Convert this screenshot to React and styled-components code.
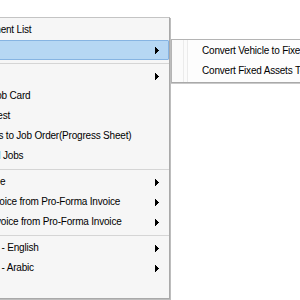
import React from 'react';
import styled, { createGlobalStyle } from 'styled-components';

const GlobalStyle = createGlobalStyle`
  html, body {
    margin: 0;
    padding: 0;
    background: #ffffff;
    overflow: hidden;
  }
  body {
    font-family: "Liberation Sans", Arial, sans-serif;
    font-size: 10px;
    color: #000000;
  }
`;

const Page = styled.div`
  position: relative;
  width: 300px;
  height: 300px;
  overflow: hidden;
  background: #ffffff;
`;

// popup menus lie over the page, so they are placed absolutely
const Menu = styled.div`
  position: absolute;
  left: -80px;
  top: 17px;
  width: 250px;
  box-sizing: border-box;
  display: flex;
  flex-direction: column;
  padding: 2px 0 0 2px;
  background: #f6f6f6;
  border: 1px solid #a9a9a9;
  border-top-color: #c4c4c4;
  box-shadow: 1px 1px 0 #bdbdbd;
`;

const SubMenu = styled.div`
  position: absolute;
  left: 171px;
  top: 39px;
  width: 200px;
  box-sizing: border-box;
  display: flex;
  flex-direction: column;
  padding: 1px 0 1px 1px;
  border: 1px solid #b4b4b4;
  border-bottom-color: #a9a9a9;
  box-shadow: 0 1px 0 #c9c9c9;
  background: linear-gradient(
    to right,
    #fbfbfb 0 11px,
    #ebebeb 11px 12px,
    #fbfbfb 12px 15px,
    #ebebeb 15px 16px,
    #fdfdfd 16px
  );
`;

const Item = styled.div`
  display: flex;
  align-items: center;
  height: 20px;
  box-sizing: border-box;
  padding-left: ${(p) => p.$indent}px;
  padding-right: 9px;
  white-space: nowrap;
  letter-spacing: -0.2px;
  border: 1px solid ${(p) => (p.$active ? '#86b4e2' : 'transparent')};
  background: ${(p) => (p.$active ? '#b6d7f3' : 'transparent')};
  border-radius: 1px;
`;

const Label = styled.span`
  flex: 1;
  line-height: 18px;
  margin-left: -1px;
`;

const Separator = styled.div`
  height: 6px;
  display: flex;
  align-items: center;
  &::after {
    content: '';
    flex: 1;
    height: 0;
    border-top: 1px solid #d5d5d5;
  }
`;

const Arrow = () => (
  <svg width="4" height="7" viewBox="0 0 4 7">
    <rect x="0" y="0" width="1" height="7" fill="#000" />
    <rect x="1" y="1" width="1" height="5" fill="#000" />
    <rect x="2" y="2" width="1" height="3" fill="#000" />
    <rect x="3" y="3" width="1" height="1" fill="#000" />
  </svg>
);

const mainItems = [
  { label: 'Appointment List' },
  { label: 'Vehicles', sub: true, active: true },
  'sep',
  { label: 'Reports', sub: true },
  { label: 'Create Job Card' },
  { label: 'Oil Request' },
  { label: 'Add Items to Job Order(Progress Sheet)' },
  { label: 'Delivered Jobs' },
  'sep',
  { label: 'Guarantee', sub: true },
  { label: 'Sales Invoice from Pro-Forma Invoice', sub: true },
  { label: 'Credit Invoice from Pro-Forma Invoice', sub: true },
  'sep',
  { label: 'Job Card - English', sub: true },
  { label: 'Job Card - Arabic', sub: true },
  { label: 'Settings' },
];

const subItems = [
  'Convert Vehicle to Fixed Assets',
  'Convert Fixed Assets To Vehicle',
];

export default function App() {
  return (
    <Page>
      <GlobalStyle />
      <Menu>
        {mainItems.map((item, i) =>
          item === 'sep' ? (
            <Separator key={i} />
          ) : (
            <Item key={i} $indent={37} $active={item.active}>
              <Label>{item.label}</Label>
              {item.sub && <Arrow />}
            </Item>
          ),
        )}
      </Menu>
      <SubMenu>
        {subItems.map((label) => (
          <Item key={label} $indent={29}>
            <Label>{label}</Label>
          </Item>
        ))}
      </SubMenu>
    </Page>
  );
}
